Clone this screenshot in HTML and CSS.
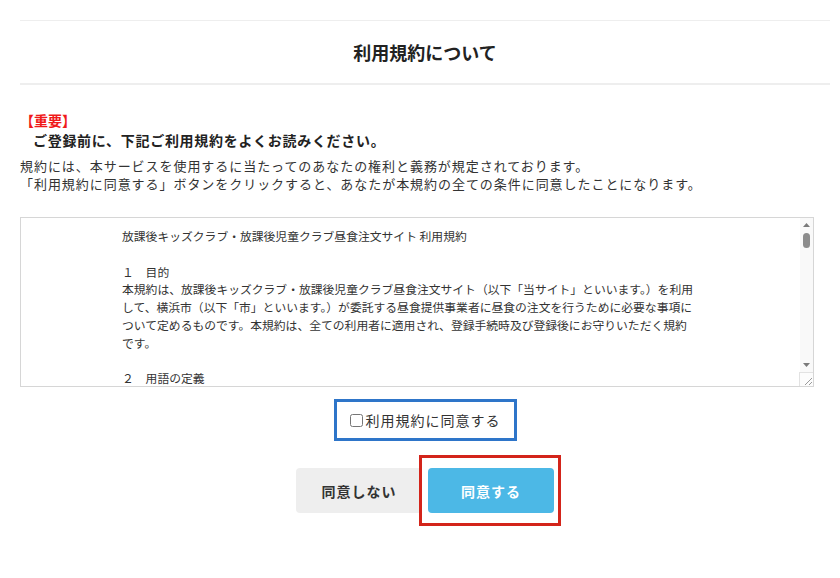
FILE: index.html
```html
<!DOCTYPE html>
<html lang="ja">
<head>
<meta charset="UTF-8">
<meta name="viewport" content="width=device-width, initial-scale=1.0">
<title>利用規約について</title>
<link rel="stylesheet" href="styles.css">
</head>
<body>
<div class="page">
  <div class="page-head">
    <h1>利用規約について</h1>
  </div>

  <div class="notice">
    <p class="notice-mark">【重要】</p>
    <p class="notice-lead">ご登録前に、下記ご利用規約をよくお読みください。</p>
    <p class="notice-text">規約には、本サービスを使用するに当たってのあなたの権利と義務が規定されております。<br>「利用規約に同意する」ボタンをクリックすると、あなたが本規約の全ての条件に同意したことになります。</p>
  </div>

  <div class="terms">
    <div class="terms-text">放課後キッズクラブ・放課後児童クラブ昼食注文サイト 利用規約

１　目的
本規約は、放課後キッズクラブ・放課後児童クラブ昼食注文サイト（以下「当サイト」といいます。）を利用
して、横浜市（以下「市」といいます。）が委託する昼食提供事業者に昼食の注文を行うために必要な事項に
ついて定めるものです。本規約は、全ての利用者に適用され、登録手続時及び登録後にお守りいただく規約
です。

２　用語の定義
本規約において使用する用語の定義は、次のとおりとします。
（１）利用者
当サイトに登録し、昼食の注文を行う保護者をいいます。</div>
    <div class="scrollbar">
      <span class="sb-arrow"><svg width="7" height="4" viewBox="0 0 7 4"><path d="M0 4 L3.5 0 L7 4 Z" fill="#7a7a7a"/></svg></span>
      <span class="sb-thumb"></span>
      <span class="sb-track"></span>
      <span class="sb-arrow"><svg width="7" height="4" viewBox="0 0 7 4"><path d="M0 0 L3.5 4 L7 0 Z" fill="#7a7a7a"/></svg></span>
      <span class="sb-corner"><svg width="13" height="13" viewBox="0 0 13 13"><path d="M5 12 L12 5 M9 12 L12 9" stroke="#9a9a9a" stroke-width="1"/></svg></span>
    </div>
  </div>

  <div class="agree">
    <label class="agree-check"><input type="checkbox">利用規約に同意する</label>
  </div>

  <div class="actions">
    <button type="button" class="btn btn-cancel">同意しない</button>
    <span class="btn-mark"><button type="button" class="btn btn-ok">同意する</button></span>
  </div>
</div>
</body>
</html>
```

FILE: styles.css
```css
body {
  margin: 0;
  font-family: "Noto Sans CJK JP", "Noto Sans", sans-serif;
  color: #333;
  background: #fff;
}
p {
  margin: 0;
}
.page {
  padding: 20px 10px 60px 20px;
}
.page-head {
  border-top: 1px solid #eee;
  border-bottom: 2px solid #eee;
  text-align: center;
}
.page-head h1 {
  margin: 0;
  font-size: 18px;
  font-weight: 700;
  line-height: 62px;
  color: #222;
}
.notice {
  margin-top: 25px;
}
.notice-mark {
  color: #f01a1a;
  font-size: 14px;
  font-weight: 700;
  line-height: 20px;
}
.notice-lead {
  padding-left: 13px;
  font-size: 14px;
  font-weight: 700;
  letter-spacing: 0.7px;
  line-height: 20px;
  color: #222;
}
.notice-text {
  margin-top: 7px;
  font-size: 13px;
  letter-spacing: 0.95px;
  line-height: 18px;
}
.terms {
  display: flex;
  box-sizing: border-box;
  width: 98%;
  height: 170px;
  margin-top: 24px;
  border: 1px solid #d6d6d6;
  background: #fff;
}
.terms-text {
  flex: 1;
  overflow: hidden;
  padding: 9px 0 0 101px;
  white-space: pre-wrap;
  font-size: 11.8px;
  line-height: 17.75px;
  color: #333;
}
.scrollbar {
  display: flex;
  flex-direction: column;
  width: 13px;
  background: #f9f9f9;
}
.sb-arrow {
  display: flex;
  justify-content: center;
  align-items: center;
  height: 14px;
  padding-left: 1px;
}
.sb-thumb {
  height: 15px;
  margin: 1px 3px 0 3px;
  border-radius: 4px;
  background: #8c8c8c;
}
.sb-track {
  flex: 1;
}
.sb-corner {
  display: block;
  height: 13px;
  border-top: 1px solid #e2e2e2;
  border-left: 1px solid #e2e2e2;
  margin-left: -1px;
  background: #fcfcfc;
}
.sb-corner svg {
  display: block;
}
.agree {
  display: flex;
  justify-content: center;
  margin-top: 12px;
}
.agree-check {
  display: flex;
  align-items: center;
  height: 36px;
  padding: 0 13px;
  border: 3px solid #2e75c9;
  font-size: 14px;
  letter-spacing: 1px;
  color: #333;
}
.agree-check input {
  width: 13px;
  height: 13px;
  margin: 1px 3px 0 0;
}
.actions {
  display: flex;
  justify-content: center;
  gap: 6px;
  margin-top: 27px;
}
.btn {
  width: 126px;
  height: 45px;
  border: none;
  border-radius: 4px;
  font-family: "Noto Sans CJK JP", "Noto Sans", sans-serif;
  font-size: 14px;
  font-weight: 700;
  letter-spacing: 1px;
  cursor: pointer;
}
.btn-cancel {
  background: #eeeeee;
  color: #333;
}
.btn-ok {
  display: block;
  background: #4cb8e6;
  color: #fff;
}
/* 赤枠の注記 */
.btn-mark {
  position: relative;
  display: block;
}
.btn-mark::after {
  content: "";
  position: absolute;
  top: -13px;
  right: -7px;
  bottom: -13px;
  left: -9px;
  border: 3px solid #d3241a;
  pointer-events: none;
}
```
